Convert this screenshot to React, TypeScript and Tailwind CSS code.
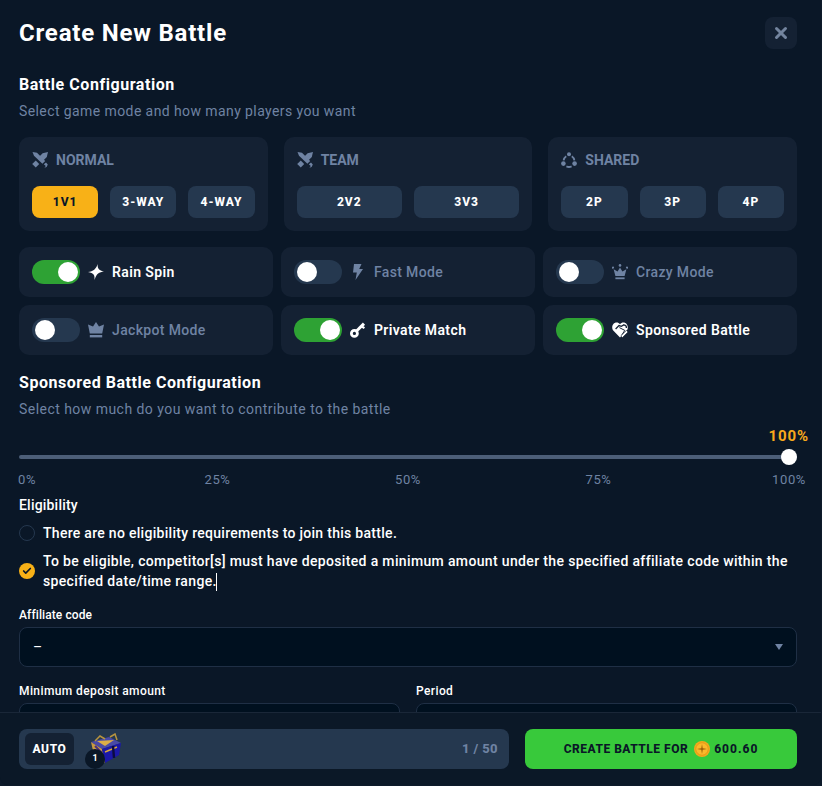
import { ReactNode } from "react";
import { X, Check } from "lucide-react";

const font = "font-['Roboto','Liberation_Sans',sans-serif]";

function Swords({ className }: { className?: string }) {
  return (
    <svg viewBox="0 0 16 16" className={className} fill="currentColor">
      <path d="M0.5 0 L5 0.8 L13.2 9 L10.4 11.8 L2 3.8 Z" />
      <path d="M16 0 L10.6 1.2 L6.4 5.4 L10.4 9.4 L14.8 5 Z" />
      <path d="M3.8 8.6 L7.2 12 L3.8 15.6 L0.2 12 Z" />
      <path d="M11.8 12.2 L13.8 14 L12.4 15.8 L14.6 15 L15.8 12.6 L14 10.4 Z" />
    </svg>
  );
}

function SharedIcon({ className }: { className?: string }) {
  return (
    <svg viewBox="0 0 16 16" className={className} fill="none" stroke="currentColor">
      <path d="M5.2 4.2 A6.4 6.4 0 0 0 2.6 8.4" strokeWidth="1.8" />
      <path d="M10.8 4.2 A6.4 6.4 0 0 1 13.4 8.4" strokeWidth="1.8" />
      <path d="M5.4 14.4 A6.4 6.4 0 0 0 10.6 14.4" strokeWidth="1.8" />
      <circle cx="8" cy="2.2" r="2" fill="currentColor" stroke="none" />
      <circle cx="2.4" cy="11.6" r="2.3" fill="currentColor" stroke="none" />
      <circle cx="13.6" cy="11.6" r="2.3" fill="currentColor" stroke="none" />
    </svg>
  );
}

function Sparkle({ className }: { className?: string }) {
  return (
    <svg viewBox="0 0 16 16" className={className} fill="currentColor">
      <path d="M9.8 0 C9.4 3.6 9.8 6 16 7.6 C11.2 8.2 8.4 9.6 6.6 16 C6.8 11.2 6 9 0 8 C5.4 7.4 8 5 9.8 0 Z" />
    </svg>
  );
}

function Bolt({ className }: { className?: string }) {
  return (
    <svg viewBox="0 0 16 16" className={className} fill="currentColor">
      <path d="M4 0 H11.5 L9.2 5 H13 L5.5 16 L6.8 8.6 H3 Z" />
    </svg>
  );
}

function JackpotCrown({ className }: { className?: string }) {
  return (
    <svg viewBox="0 0 16 16" className={className} fill="currentColor">
      <path d="M8 0 L11 4.6 L16 2.6 L14.2 11.4 H1.8 L0 2.6 L5 4.6 Z" />
      <rect x="1.8" y="13" width="12.4" height="2.4" />
    </svg>
  );
}

function CrazyCrown({ className }: { className?: string }) {
  return (
    <svg viewBox="0 0 16 16" className={className} fill="currentColor">
      <path d="M8 3.4 L10.4 7.4 L14.4 5.2 L12.6 12 H3.4 L1.6 5.2 L5.6 7.4 Z" />
      <circle cx="8" cy="1.4" r="1.3" />
      <circle cx="1" cy="3.6" r="1.1" />
      <circle cx="15" cy="3.6" r="1.1" />
      <rect x="3.4" y="13.4" width="9.2" height="1.8" />
    </svg>
  );
}

function KeyIcon({ className }: { className?: string }) {
  return (
    <svg viewBox="0 0 16 16" className={className} fill="none" stroke="currentColor">
      <circle cx="4.4" cy="11.4" r="3" strokeWidth="2.8" />
      <path d="M6.8 8.8 L14 1.6" strokeWidth="3" />
      <path d="M11 4 L14.4 6.2" strokeWidth="2.2" />
    </svg>
  );
}

function HeartTag({ className }: { className?: string }) {
  return (
    <svg viewBox="0 0 16 16" className={className}>
      <path d="M8 15.6 L1 8.2 C-1 5 1 0.6 4.6 0.6 C6 0.6 7.2 1.2 8 2.2 C8.8 1.2 10 0.6 11.4 0.6 C15 0.6 17 5 15 8.2 Z" fill="currentColor" />
      <path d="M3.6 7 L7 3.6 L9.4 4.4 L12 2.8 C13.4 3 14.6 4.4 14.4 6" stroke="#142133" strokeWidth="1.3" fill="none" />
      <path d="M7.4 5.6 L12.8 8.4 L9.8 13" stroke="#142133" strokeWidth="1" fill="none" />
      <path d="M10.4 15.6 L16 10 L14.4 8.4 L8.8 14 Z" fill="currentColor" stroke="#142133" strokeWidth="0.6" />
    </svg>
  );
}

function Chest() {
  return (
    <svg viewBox="0 0 32 32" className="w-[32px] h-[32px]">
      <path d="M1 9 L19 4 L31 10 L12 16 Z" fill="#4a4aa6" />
      <path d="M1 9 L12 16 L15 30 L4 22 Z" fill="#c99a42" />
      <path d="M12 16 L31 10 L29 22 L15 30 Z" fill="#1b18a8" />
      <path d="M5 8 L10 3 L15 6 M20 4 L25 1 L27 7" stroke="#b8943f" strokeWidth="1.5" fill="none" />
      <path d="M7 8 L24 7 L15 13 Z" fill="#dcae47" />
      <path d="M5 13 L11 19 L13 26" stroke="#4a2f7c" strokeWidth="2" fill="none" />
      <path d="M15 19 L27 14" stroke="#d8a83f" strokeWidth="1.4" />
      <path d="M23 13 L24 25" stroke="#0c0b40" strokeWidth="2.4" />
    </svg>
  );
}

function Coin() {
  return (
    <svg viewBox="0 0 16 16" className="w-[16px] h-[16px]">
      <circle cx="8" cy="8" r="8" fill="#f5a81c" />
      <circle cx="8" cy="8" r="6.2" fill="#fbb92a" stroke="#d98b10" strokeWidth="0.6" />
      <path d="M8 3 L8.7 7.3 L13 8 L8.7 8.7 L8 13 L7.3 8.7 L3 8 L7.3 7.3 Z" fill="#9a5c08" />
    </svg>
  );
}

function ModeCard({ icon, title, options, active }: { icon: ReactNode; title: string; options: string[]; active?: string }) {
  return (
    <div className="bg-[#142133] rounded-[10px] px-[13px] pt-[13px] h-[94px]">
      <div className="flex items-center gap-[8px] h-[20px] text-[#6f83a3]">
        {icon}
        <span className="text-[14px] font-bold">{title}</span>
      </div>
      <div className="flex gap-[12px] mt-[16px]">
        {options.map((o) => (
          <button
            key={o}
            className={
              o === active
                ? "flex-1 h-[32px] rounded-[8px] bg-[#f8b117] text-[#0a1727] text-[12px] font-extrabold tracking-[1px]"
                : "flex-1 h-[32px] rounded-[8px] bg-[#25384f] text-white text-[12px] font-extrabold tracking-[1px]"
            }
          >
            {o}
          </button>
        ))}
      </div>
    </div>
  );
}

function Toggle({ icon, label, on }: { icon: ReactNode; label: string; on?: boolean }) {
  return (
    <div className="bg-[#142133] rounded-[10px] h-[50px] pl-[13px] flex items-center gap-[8px]">
      <div
        className={
          on
            ? "w-[48px] h-[24px] rounded-full bg-[#2ea234] flex items-center justify-end pr-[2px]"
            : "w-[48px] h-[24px] rounded-full bg-[#25384f] flex items-center justify-start pl-[3px]"
        }
      >
        <div className="w-[20px] h-[20px] rounded-full bg-white" />
      </div>
      <span className={on ? "text-white" : "text-[#6f83a3]"}>{icon}</span>
      <span className={on ? "text-white text-[14px] font-semibold tracking-[0.38px]" : "text-[#6f83a3] text-[14px] font-medium tracking-[0.35px]"}>
        {label}
      </span>
    </div>
  );
}

export default function App() {
  return (
    <div className={`${font} w-[822px] h-[786px] bg-[#0d1a2a] overflow-hidden`}>
      <div className="w-[821px] h-[785px] bg-[#0a1727] rounded-b-[8px] flex flex-col overflow-hidden">
        <div className="flex-1 min-h-0 overflow-hidden pl-[19px] pr-[24px]">
          <div className="flex items-center justify-between pt-[17px] h-[49px]">
            <h1 className="text-[24px] font-bold text-white tracking-[0.8px]">Create New Battle</h1>
            <button className="w-[32px] h-[32px] rounded-[8px] bg-[#142133] flex items-center justify-center text-[#73849e]">
              <X size={18} strokeWidth={4} />
            </button>
          </div>

          <h2 className="mt-[25px] text-[16px] leading-[22px] font-bold text-white tracking-[0.55px]">Battle Configuration</h2>
          <p className="mt-[5px] text-[14px] leading-[20px] text-[#6f83a3] tracking-[0.41px]">Select game mode and how many players you want</p>

          <div className="grid grid-cols-3 gap-[16px] mt-[16px]">
            <ModeCard icon={<Swords className="w-[16px] h-[16px]" />} title="NORMAL" options={["1V1", "3-WAY", "4-WAY"]} active="1V1" />
            <ModeCard icon={<Swords className="w-[16px] h-[16px]" />} title="TEAM" options={["2V2", "3V3"]} />
            <ModeCard icon={<SharedIcon className="w-[16px] h-[16px]" />} title="SHARED" options={["2P", "3P", "4P"]} />
          </div>

          <div className="grid grid-cols-3 gap-[8px] mt-[16px]">
            <Toggle on icon={<Sparkle className="w-[16px] h-[16px]" />} label="Rain Spin" />
            <Toggle icon={<Bolt className="w-[16px] h-[16px]" />} label="Fast Mode" />
            <Toggle icon={<CrazyCrown className="w-[16px] h-[16px]" />} label="Crazy Mode" />
            <Toggle icon={<JackpotCrown className="w-[16px] h-[16px]" />} label="Jackpot Mode" />
            <Toggle on icon={<KeyIcon className="w-[16px] h-[16px]" />} label="Private Match" />
            <Toggle on icon={<HeartTag className="w-[16px] h-[16px]" />} label="Sponsored Battle" />
          </div>

          <h2 className="mt-[17px] text-[16px] leading-[22px] font-bold text-white tracking-[0.53px]">Sponsored Battle Configuration</h2>
          <p className="mt-[5px] text-[14px] leading-[20px] text-[#6f83a3] tracking-[0.46px]">Select how much do you want to contribute to the battle</p>

          <div className="flex justify-end mt-[8px] h-[18px] text-[15px] leading-[18px] font-bold text-[#f8a91c]">
            <span className="-mr-[12px] tracking-[0.9px]">100%</span>
          </div>
          <div className="relative mt-[10px] h-[4px] rounded-full bg-[#4c5e78]">
            <div className="absolute right-0 top-[-6px] w-[16px] h-[16px] rounded-full bg-white" />
          </div>
          <div className="flex justify-between px-[8px] mt-[12px] h-[18px] text-[13px] leading-[18px] text-[#6f83a3]">
            {["0%", "25%", "50%", "75%", "100%"].map((m) => (
              <span key={m} className="w-0 flex justify-center tracking-[0.6px]">{m}</span>
            ))}
          </div>

          <h3 className="mt-[6px] text-[14px] leading-[20px] font-medium text-white tracking-[0.2px]">Eligibility</h3>

          <div className="flex items-center gap-[8px] mt-[8px] h-[20px]">
            <div className="w-[16px] h-[16px] rounded-full border border-[#25384f]" />
            <span className="text-[14px] font-medium text-white tracking-[0.29px]">There are no eligibility requirements to join this battle.</span>
          </div>
          <div className="flex items-center gap-[8px] mt-[8px]">
            <div className="w-[16px] h-[16px] shrink-0 rounded-full bg-[#f8b117] flex items-center justify-center text-[#0a1727]">
              <Check size={10} strokeWidth={4} />
            </div>
            <span className="text-[14px] leading-[20px] font-medium text-white tracking-[0.35px]">
              To be eligible, competitor[s] must have deposited a minimum amount under the specified affiliate code within the specified date/time range.
              <span className="inline-block w-px h-[18px] bg-white align-middle -ml-[1px]" />
            </span>
          </div>

          <label className="block mt-[15px] text-[12px] leading-[18px] font-medium text-white tracking-[0.1px]">Affiliate code</label>
          <div className="mt-[3px] h-[40px] rounded-[8px] border border-[#1f2f45] bg-[#00101f] px-[13px] flex items-center justify-between text-white text-[14px]">
            <span>–</span>
            <span className="w-0 h-0 border-l-[4px] border-r-[4px] border-t-[6px] border-l-transparent border-r-transparent border-t-[#6f83a3]" />
          </div>

          <div className="grid grid-cols-2 gap-[16px] mt-[15px]">
            <div>
              <label className="block text-[12px] leading-[18px] font-medium text-white tracking-[0.4px]">Minimum deposit amount</label>
              <div className="mt-[3px] h-[40px] rounded-[8px] border border-[#1f2f45] bg-[#00101f]" />
            </div>
            <div>
              <label className="block text-[12px] leading-[18px] font-medium text-white tracking-[0.4px]">Period</label>
              <div className="mt-[3px] h-[40px] rounded-[8px] border border-[#1f2f45] bg-[#00101f]" />
            </div>
          </div>
        </div>

        <div className="shrink-0 h-[73px] border-t border-[#1a2738] bg-[#0b1827] pl-[19px] pr-[24px] pt-[16px] flex gap-[16px]">
          <div className="flex-1 h-[40px] rounded-[8px] bg-[#25384f] flex items-center pl-[6px] pr-[11px]">
            <div className="w-[49px] h-[32px] rounded-[6px] bg-[#142133] flex items-center justify-center text-white text-[12px] font-extrabold tracking-[0.6px]">AUTO</div>
            <div className="relative ml-[16px] w-[32px] h-[32px]">
              <Chest />
              <span className="absolute -left-[5px] bottom-[-4px] w-[20px] h-[20px] rounded-full bg-[#0a1727] flex items-center justify-center text-white text-[9px] font-bold">1</span>
            </div>
            <span className="ml-auto text-[13px] font-extrabold text-[#6f83a3] tracking-[0.4px]">1 / 50</span>
          </div>
          <button className="w-[272px] h-[40px] rounded-[8px] bg-[#38c93b] flex items-center justify-center gap-[6px] text-[#0a1727] text-[12px] font-extrabold">
            <span className="tracking-[0.5px]">CREATE BATTLE FOR</span>
            <Coin />
            <span className="-ml-[2px] tracking-[1px]">600.60</span>
          </button>
        </div>
      </div>
    </div>
  );
}
